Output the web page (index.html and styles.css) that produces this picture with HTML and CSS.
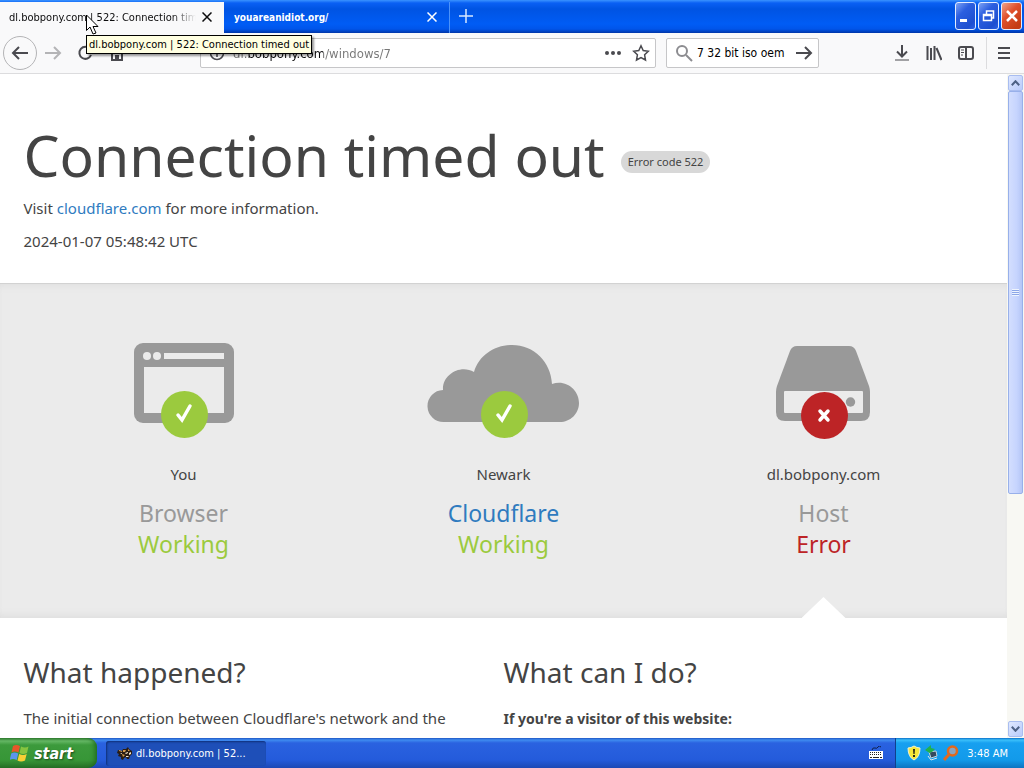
FILE: index.html
```
<!DOCTYPE html>
<html lang="en">
  <head>
    <title>dl.bobpony.com | 522: Connection timed out</title>
    <meta charset="utf-8">
    <meta name="viewport" content="width=device-width">
    <link rel="stylesheet" href="styles.css">
  </head>
  <body>

    <header class="titlebar">
        <div class="tab active">
            <span class="tab-title">dl.bobpony.com | 522: Connection timed out</span>
            <button class="tab-close" aria-label="Close tab"><svg width="10" height="10" viewBox="0 0 10 10"><path d="M0.5 0.5l9 9M9.5 0.5l-9 9"/></svg></button>
        </div>
        <div class="tab">
            <span class="tab-title">youareanidiot.org/</span>
            <button class="tab-close" aria-label="Close tab"><svg width="10" height="10" viewBox="0 0 10 10"><path d="M0.5 0.5l9 9M9.5 0.5l-9 9"/></svg></button>
        </div>
        <button class="new-tab" aria-label="New tab"><svg width="14" height="14" viewBox="0 0 14 14"><path d="M7 0v14M0 7h14"/></svg></button>
        <div class="window-buttons">
            <button class="win" aria-label="Minimize"><svg width="20" height="26" viewBox="0 0 20 26"><path class="solid" d="M4 16h7v3H4z"/></svg></button>
            <button class="win" aria-label="Restore"><svg width="20" height="26" viewBox="0 0 20 26"><path d="M7.500 11V8h7v7h-2M4.500 11.500h8v6h-8zM4 12.500h8"/></svg></button>
            <button class="win close" aria-label="Close"><svg width="20" height="26" viewBox="0 0 20 26"><path class="thick" d="M5 8l10 10M15 8l-10 10"/></svg></button>
        </div>
    </header>

    <nav class="toolbar">
        <button class="tool back" aria-label="Back"><svg width="18" height="16" viewBox="0 0 18 16"><path d="M17 8H2M8 2L2 8l6 6"/></svg></button>
        <button class="tool forward" aria-label="Forward"><svg width="18" height="16" viewBox="0 0 18 16"><path d="M1 8h15M10 2l6 6-6 6"/></svg></button>
        <button class="tool" aria-label="Reload"><svg width="16" height="16" viewBox="0 0 16 16"><path d="M13 4a6 6 0 1 0 1 6M14 1v5H9"/></svg></button>
        <button class="tool home" aria-label="Home"><svg width="16" height="16" viewBox="0 0 16 16"><path d="M1 8l7-6 7 6M3 7v8h10V7M7 15v-4h2v4"/></svg></button>
        <div class="field url">
            <svg width="16" height="16" viewBox="0 0 16 16"><circle cx="8" cy="8" r="6.500"/><path d="M8 7v5M8 4v1.500"/></svg>
            <input class="url-input" type="text" value="dl.bobpony.com/windows/7" aria-label="Address" spellcheck="false">
            <button class="field-button" aria-label="Page actions"><svg width="18" height="16" viewBox="0 0 18 16"><g class="solid"><circle cx="3" cy="8" r="2"/><circle cx="9" cy="8" r="2"/><circle cx="15" cy="8" r="2"/></g></svg></button>
            <button class="field-button" aria-label="Bookmark"><svg width="18" height="18" viewBox="0 0 18 18"><path d="M9 1.800l2.200 4.700 5.100.7-3.700 3.600.9 5.200L9 13.500 4.500 16l.9-5.200-3.700-3.600 5.100-.7z"/></svg></button>
        </div>
        <div class="field search">
            <svg class="lens" width="18" height="18" viewBox="0 0 18 18"><circle cx="7" cy="7" r="5"/><path d="M11 11l6 6"/></svg>
            <input class="search-input" type="text" value="7 32 bit iso oem" aria-label="Search" spellcheck="false">
            <button class="field-button" aria-label="Go"><svg width="18" height="16" viewBox="0 0 18 16"><path d="M1 8h15M10 2l6 6-6 6"/></svg></button>
        </div>
        <div class="tools">
            <button class="tool" aria-label="Downloads"><svg width="16" height="16" viewBox="0 0 16 16"><path d="M8 0v11M3 6.500l5 5 5-5"/><path class="thin" d="M1 15h14"/></svg></button>
            <button class="tool" aria-label="Library"><svg width="16" height="16" viewBox="0 0 16 16"><path d="M1.500 1v14M5 3v12M8.500 1v14M10.500 3l5 12"/></svg></button>
            <button class="tool" aria-label="Sidebars"><svg width="16" height="16" viewBox="0 0 16 16"><rect x="1" y="2" width="14" height="12" rx="2"/><path d="M8 2v12"/><path class="thin" d="M3 5h3M3 7.500h3M3 10h2"/></svg></button>
            <button class="tool menu" aria-label="Menu"><svg width="14" height="14" viewBox="0 0 14 14"><path d="M1 2h12M1 7h12M1 12h12"/></svg></button>
        </div>
    </nav>

    <div class="viewport">
        <main class="page">
            <section class="intro">
                <h1>Connection timed out <span class="code">Error code 522</span></h1>
                <p>Visit <a href="https://www.cloudflare.com/">cloudflare.com</a> for more information.</p>
                <p class="time">2024-01-07 05:48:42 UTC</p>
            </section>

            <section class="status">
                <div class="wrap">
                    <div class="item">
                        <svg class="picture" width="160" height="96" viewBox="1 0 160 96">
                            <rect class="gray" x="31" y="0" width="100" height="80" rx="9"/>
                            <path class="light" d="M61 10h60v6H61zM41 24h80v46H41z"/>
                            <circle class="light" cx="44" cy="13" r="4"/><circle class="light" cx="54" cy="13" r="4"/>
                            <circle class="ok" cx="81.500" cy="71.500" r="23.500"/>
                            <path class="mark" d="M75 72l4 5 8-14"/>
                        </svg>
                        <p>You</p>
                        <h3>Browser</h3>
                        <span class="state working">Working</span>
                    </div>
                    <div class="item">
                        <svg class="picture" width="160" height="96" viewBox="1 0 160 96">
                            <path class="gray" d="M21 79a16 16 0 0 1-1-32c-1-15 17-26 31-18C56 12 72 2 89 2c22 0 39 17 40 39 14-5 27 6 27 19 0 11-9 19-19 19z"/>
                            <circle class="ok" cx="81.500" cy="71.500" r="23.500"/>
                            <path class="mark" d="M75 72l4 5 8-14"/>
                        </svg>
                        <p>Newark</p>
                        <h3><a href="https://www.cloudflare.com/">Cloudflare</a></h3>
                        <span class="state working">Working</span>
                    </div>
                    <div class="item current">
                        <svg class="picture" width="160" height="96" viewBox="1 0 160 96">
                            <path class="gray" d="M54 3h52q5 0 7 5l13 35q1 3 1 6v20q0 9-9 9H42q-9 0-9-9V49q0-3 1-6L47 8q2-5 7-5z"/>
                            <rect class="light" x="41" y="48" width="79" height="22" rx="1"/>
                            <circle class="gray" cx="107.500" cy="59" r="4.700"/>
                            <circle class="bad" cx="81.500" cy="72.500" r="23.500"/>
                            <path class="mark" d="M77 68l8 9M85 68l-8 9"/>
                        </svg>
                        <p>dl.bobpony.com</p>
                        <h3>Host</h3>
                        <span class="state error">Error</span>
                    </div>
                </div>
            </section>

            <section class="wrap details">
                <div>
                    <h2>What happened?</h2>
                    <p>The initial connection between Cloudflare's network and the</p>
                </div>
                <div>
                    <h2>What can I do?</h2>
                    <p><strong>If you're a visitor of this website:</strong></p>
                </div>
            </section>
        </main>

        <div class="scrollbar">
            <button class="scroll-button" aria-label="Scroll up"><svg width="9" height="6" viewBox="0 0 9 6"><path d="M0.800 5.200l3.700-4 3.700 4"/></svg></button>
            <div class="track"><div class="thumb"></div></div>
            <button class="scroll-button" aria-label="Scroll down"><svg width="9" height="6" viewBox="0 0 9 6"><path d="M0.800 0.800l3.700 4 3.700-4"/></svg></button>
        </div>
    </div>

    <footer class="taskbar">
        <button class="start">
            <svg width="20" height="20" viewBox="0 0 20 20">
                <path fill="#e8562a" d="M3 3q3-2 7 0L8.500 9.500q-4-2-7 0z"/>
                <path fill="#86c440" d="M11 3.500q4 2 7.500 0L17 10q-4 2-7.500 0z"/>
                <path fill="#5b95ee" d="M1.200 10.500q3-2 7 0L6.700 17q-4-2-7 0z"/>
                <path fill="#f8cf35" d="M9.200 11q4 2 7.500 0L15 17.500q-4 2-7.500 0z"/>
            </svg>
            start
        </button>
        <button class="task">
            <svg width="16" height="16" viewBox="0 0 16 16">
                <path fill="#2a1c12" d="M1 5l4 1 1-2 3 0 2-2 1 2 3 2 0 3-2 2-1 3-2 0-1-2-2 1-1 2-2-1 0-2-3-1 1-2-2-1z"/>
                <path fill="#d49a4a" d="M2 5l3 1 0 1-3-1zM6 5h3l-1 2-2 0zM5 9l3 1-2 2zM11 4l2 2-2 0z"/>
                <path fill="#f6e6cc" d="M8 8l3-1 0 1-2 1zM12 8l2-1 0 2-2 1zM9 11h3l-1 1-2 0zM3 8h2v1z"/>
            </svg>
            dl.bobpony.com | 52...
        </button>
        <svg class="keyboard" width="14" height="14" viewBox="0 0 14 14">
            <path fill="none" stroke="#10204a" d="M3 4q1-3 3-2t3-1 3 0"/>
            <path fill="#fff" d="M0 5h14v8H0z"/>
            <path fill="none" stroke="#222" stroke-dasharray="1 1" d="M1 6.500h12M1 8.500h12"/>
            <path fill="none" stroke="#222" d="M1 11.500h2M4 11.500h6M11 11.500h2"/>
        </svg>
        <div class="tray">
            <svg width="14" height="16" viewBox="0 0 14 16">
                <path fill="#f7e83a" stroke="#f5f3d0" d="M7 1q3 2 6 2 0 9-6 12Q1 12 1 3q3 0 6-2z"/>
                <path fill="#2a2a18" d="M6 4h2l-.4 5H6.400zM6 10h2v2H6z"/>
            </svg>
            <svg width="16" height="16" viewBox="0 0 16 16">
                <path fill="#34495e" stroke="#c4d4dc" d="M5 7l7-1 1 5-6 2z"/>
                <path fill="#22b14c" d="M1 5l6-5v3l4 1-3 3-2 0 1 2z"/>
                <path fill="none" stroke="#dfe8ea" d="M4 11l3 4 6-2"/>
            </svg>
            <svg width="16" height="16" viewBox="0 0 16 16">
                <circle fill="#8aa5c0" stroke="#e2691c" stroke-width="2.500" cx="9.500" cy="6" r="4.500"/>
                <path fill="none" stroke="#e2691c" stroke-width="3" d="M6 9.500L1 15"/>
            </svg>
            <time>3:48 AM</time>
        </div>
    </footer>

    <div class="tooltip" role="tooltip">dl.bobpony.com | 522: Connection timed out</div>
    <svg class="pointer" width="13" height="21" viewBox="0 0 13 21"><path fill="#fff" stroke="#000" d="M0.500 1v15.500l3.500-3.500 3 7 3-1-3-6.500h5z"/></svg>

  </body>
</html>
```
FILE: styles.css
```
* {
    box-sizing: border-box;
}
body {
    font-family: "DejaVu Sans Condensed", "DejaVu Sans", sans-serif;
    font-size: 11px;
    display: flex;
    flex-direction: column;
    height: 100vh;
    margin: 0;
    overflow: hidden;
}
button {
    font: inherit;
    color: inherit;
    display: flex;
    align-items: center;
    justify-content: center;
    flex: none;
    background: none;
    border: 0;
    margin: 0;
    padding: 0;
}
svg {
    display: block;
    flex: none;
}
a {
    color: #2f7bbf;
    text-decoration: none;
}

/* title bar with tabs */
.titlebar {
    display: flex;
    flex: none;
    height: 33px;
    padding-top: 2px;
    background: linear-gradient(#3a93ff 0, #0a60f4 3px, #0054e3 9px, #005cf5 24px, #0055ea 29px, #0036a8 33px);
}
.tab {
    display: flex;
    align-items: center;
    width: 226px;
    padding: 0 12px 1px 10px;
    color: #fff;
    border-right: 1px solid #4c93fa;
}
.tab.active {
    width: 224px;
    padding-left: 9px;
    color: #0c0c0d;
    background: #f9f9fa;
    border: 0;
}
.tab-title {
    flex: 1;
    overflow: hidden;
    white-space: nowrap;
    margin-right: 6px;
}
.tab.active .tab-title {
    -webkit-mask-image: linear-gradient(to left, transparent, #000 24px);
    mask-image: linear-gradient(to left, transparent, #000 24px);
}
.tab:not(.active) .tab-title {
    font-size: 10px;
    font-weight: bold;
}
.tab-close svg, .new-tab svg {
    fill: none;
    stroke: currentColor;
    stroke-width: 1.500;
}
.new-tab {
    color: #d8e8ff;
    width: 32px;
    padding-bottom: 3px;
}
.window-buttons {
    display: flex;
    gap: 2px;
    margin-left: auto;
    padding-right: 2px;
}
.win {
    width: 21px;
    height: 28px;
    border: 1px solid #e4edff;
    border-radius: 3px;
    background: linear-gradient(135deg, #7da2f4, #2c5fe0 35%, #1e4fd0 80%, #2a62e6);
}
.win.close {
    background: linear-gradient(135deg, #f0a48c, #e0512c 40%, #c43c14 85%);
}
.win svg {
    fill: none;
    stroke: #fff;
    stroke-width: 1.500;
}
.win .solid {
    fill: #fff;
    stroke: none;
}
.win .thick {
    stroke-width: 2.500;
}

/* navigation toolbar */
.toolbar {
    display: flex;
    align-items: center;
    flex: none;
    height: 41px;
    padding: 0 3px;
    background: #f9f9fa;
    border-bottom: 1px solid #dcdcde;
}
.toolbar svg {
    fill: none;
    stroke: #4a4a4f;
    stroke-width: 2;
}
.toolbar .solid {
    fill: #4a4a4f;
    stroke: none;
}
.toolbar .thin {
    stroke-width: 1;
}
.tool {
    width: 32px;
    height: 32px;
}
.tool.back {
    width: 34px;
    height: 34px;
    border: 1px solid #b4b4b6;
    border-radius: 50%;
}
.tool.forward svg {
    stroke: #b4b4b6;
}
.field {
    display: flex;
    align-items: center;
    height: 30px;
    background: #fff;
    border: 1px solid #c6c6c8;
    border-radius: 2px;
}
.field input {
    flex: 1;
    min-width: 0;
    border: 0;
    padding: 0;
    outline: 0;
    font-family: inherit;
}
.url {
    flex: 1;
    margin-left: 67px;
    padding: 0 4px 0 8px;
    gap: 8px;
}
.url svg:first-child, .url path {
    stroke-width: 1.500;
}
/* the domain is darker than the rest of the address */
.url-input {
    font-size: 13px;
    color: transparent;
    background: linear-gradient(to right, #777 15px, #0c0c0d 15px, #0c0c0d 90px, #777 90px);
    -webkit-background-clip: text;
    background-clip: text;
}
.url .field-button {
    width: 20px;
}
.search {
    width: 153px;
    margin-left: 10px;
    padding: 0 5px 0 8px;
}
.search-input {
    font-size: 12px;
    color: #000;
    margin-left: 4px;
}
.toolbar .lens {
    stroke: #8c8c90;
}
.tools {
    display: flex;
    margin-left: 67px;
}
.tool.menu {
    width: 35px;
    margin-left: 4px;
    border-left: 1px solid #dcdcde;
}

/* scrolled page */
.viewport {
    display: flex;
    flex: 1;
    min-height: 0;
}
.page {
    flex: 1;
    overflow: hidden;
    background: #fff;
    color: #444;
    font: 15px/24px "Noto Sans", sans-serif;
}
.page h1, .page h2, .page h3, .page p {
    margin: 0;
    font-weight: normal;
}
.wrap, .intro {
    max-width: 960px;
    margin: 0 auto;
}
.intro {
    padding: 51px 0 30px;
}
.page .intro h1 {
    display: flex;
    align-items: center;
    gap: 16px;
    font-size: 57px;
    line-height: 60px;
    margin-bottom: 11px;
}
.code {
    font-size: 11px;
    line-height: 22px;
    padding: 0 7px;
    margin-top: 14px;
    border-radius: 11px;
    background: #d8d8d8;
}
.page .intro .time {
    margin-top: 9px;
}
.status {
    padding: 60px 0 58px;
    background: #ebebeb;
    box-shadow: inset 0 1px 0 #d2d2d2, inset 0 8px 8px -6px #ddd, inset 0 -8px 8px -6px #ddd;
}
.status .wrap, .details {
    display: grid;
    grid-template-columns: repeat(3, 1fr);
}
.item {
    display: flex;
    flex-direction: column;
    align-items: center;
    position: relative;
}
.picture {
    margin-bottom: 23px;
}
.gray {
    fill: #999;
}
.light {
    fill: #ebebeb;
}
.ok {
    fill: #9bca3e;
}
.bad {
    fill: #bd2426;
}
.mark {
    fill: none;
    stroke: #fff;
    stroke-width: 3.500;
    stroke-linecap: round;
}
.page .item h3 {
    margin-top: 12px;
    color: #999;
}
.item h3, .state {
    font-size: 23px;
    line-height: 31px;
}
.working {
    color: #9bca3e;
}
.error {
    color: #bd2426;
}
/* arrow that points up to the failing part */
.item.current::after {
    content: "";
    position: absolute;
    bottom: -58px;
    width: 44px;
    height: 21px;
    background: #fff;
    clip-path: polygon(50% 0, 100% 100%, 0 100%);
}
.page .details {
    grid-template-columns: 1fr 1fr;
    padding-top: 36px;
}
.page .details h2 {
    font-size: 28px;
    line-height: 36px;
}
.page .details p {
    margin-top: 16px;
    padding-right: 30px;
}
.details strong {
    font-size: 14px;
}

.scrollbar {
    display: flex;
    flex-direction: column;
    flex: none;
    width: 17px;
    padding: 1px;
    background: #f8f8f3;
}
.scroll-button {
    height: 16px;
    border: 1px solid #a9bdf0;
    border-radius: 2px;
    background: linear-gradient(135deg, #dfe8ff, #b9cbfb);
}
.scroll-button svg {
    fill: none;
    stroke: #4d6185;
    stroke-width: 2;
}
.track {
    flex: 1;
}
.thumb {
    display: flex;
    align-items: center;
    justify-content: center;
    height: 64%;
    border: 1px solid #98b0ea;
    border-radius: 2px;
    background: linear-gradient(to right, #d3defe, #c6d4fe 60%, #b5c6f6);
}
.thumb::before {
    content: "";
    width: 7px;
    height: 7px;
    background: repeating-linear-gradient(#eef4fe 0 1px, #8ca6e8 1px 2px);
}

/* taskbar */
.taskbar {
    display: flex;
    align-items: center;
    flex: none;
    height: 30px;
    color: #fff;
    background: linear-gradient(#1f56c4 0, #3f8cf0 2px, #2a62e0 5px, #245bdb 22px, #1c48b4 30px);
}
.start {
    height: 30px;
    width: 97px;
    gap: 4px;
    padding-right: 14px;
    border-radius: 0 9px 9px 0;
    font: italic bold 16px "DejaVu Sans Condensed", "DejaVu Sans", sans-serif;
    text-shadow: 1px 1px 2px #1c4a1c;
    background: linear-gradient(#2f7d2f 0, #65b865 3px, #3c9a3c 7px, #379637 22px, #266f26 30px);
    box-shadow: inset -4px 0 5px -2px #1f6a1f;
}
.task {
    justify-content: flex-start;
    height: 25px;
    width: 160px;
    margin-left: 9px;
    padding-left: 11px;
    gap: 3px;
    border-radius: 3px;
    background: #1e4fb8;
    box-shadow: inset 1px 1px 2px #0f3078;
}
.keyboard {
    margin-left: auto;
    margin-right: 12px;
}
.tray {
    display: flex;
    align-items: center;
    height: 30px;
    width: 129px;
    padding: 0 16px 0 11px;
    gap: 3px;
    border-left: 1px solid #10408c;
    background: linear-gradient(#0c6fc8 0, #3bc0fa 2px, #17a0f0 5px, #129aea 22px, #0d74c0 30px);
}
.tray time {
    margin-left: auto;
}

/* things that lie over the window */
.tooltip {
    position: absolute;
    left: 86px;
    top: 35px;
    padding: 0 2px;
    line-height: 17px;
    color: #000;
    background: #ffffe1;
    border: 1px solid #000;
    box-shadow: 2px 2px 2px rgba(0, 0, 0, 0.4);
}
.pointer {
    position: absolute;
    left: 86px;
    top: 14px;
}
```
